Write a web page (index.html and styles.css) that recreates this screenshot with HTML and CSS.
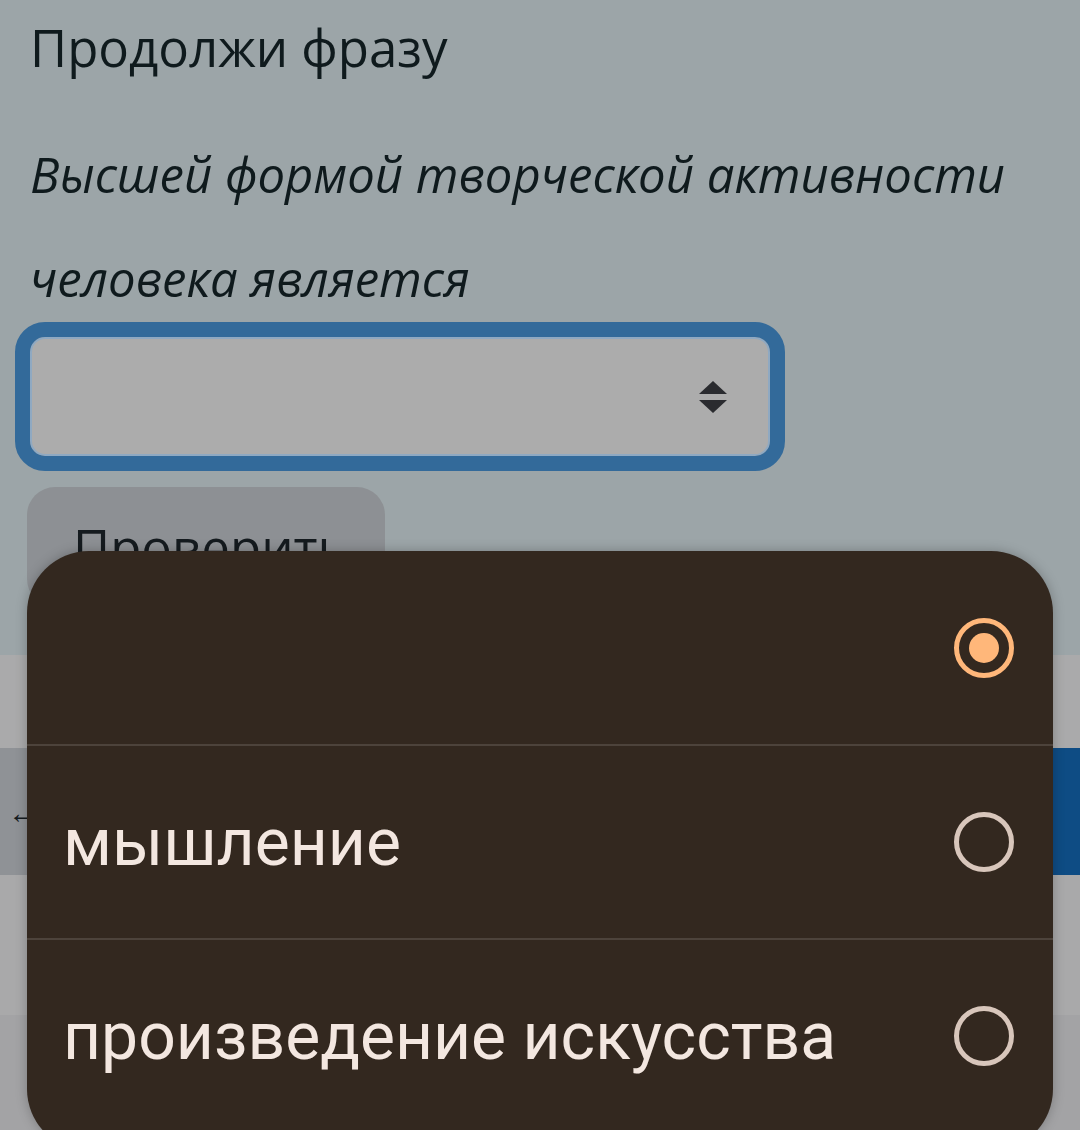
FILE: index.html
```html
<!DOCTYPE html>
<html lang="ru">
<head>
    <meta charset="UTF-8">
    <meta name="viewport" content="width=device-width, initial-scale=1.0">
    <title>Продолжи фразу</title>
<link rel="stylesheet" href="styles.css">
</head>
<body>
    <div class="quiz">
        <p class="prompt">Продолжи фразу</p>
        <p class="question">Высшей формой творческой активности человека является</p>
        <div class="select">
            <span class="arrows">
                <svg width="30" height="36" viewBox="0 0 30 36">
                    <path d="M15 2 L29 15 L1 15 Z" fill="#2a2b2f"/>
                    <path d="M1 21 L29 21 L15 34 Z" fill="#2a2b2f"/>
                </svg>
            </span>
        </div>
        <button class="check">Проверить</button>
    </div>
    <div class="band band-light"></div>
    <div class="nav">
        <div class="nav-prev">&larr;</div>
        <div class="nav-next"></div>
    </div>
    <div class="band band-mid"></div>
    <div class="band band-low"></div>

    <div class="sheet">
        <div class="option">
            <span class="label"></span>
            <span class="radio checked"></span>
        </div>
        <div class="option">
            <span class="label">мышление</span>
            <span class="radio"></span>
        </div>
        <div class="option">
            <span class="label">произведение искусства</span>
            <span class="radio"></span>
        </div>
    </div>
</body>
</html>
```

FILE: styles.css
```css
*{
    margin: 0;
    padding: 0;
    box-sizing: border-box;
}
body{
    width: 1080px;
    height: 1130px;
    overflow: hidden;
    background: #a3a3a5;
    font-family: "Open Sans", "Noto Sans", sans-serif;
    position: relative;
}
.quiz{
    height: 655px;
    background: #9ca5a8;
    padding: 15px 15px 0 30px;
    color: #0f1a1d;
}
.prompt{
    font-size: 51px;
    line-height: 64px;
}
.question{
    font-style: italic;
    font-size: 49px;
    line-height: 104px;
    margin-top: 43px;
    max-width: 1030px;
}
.select{
    width: 770px;
    height: 149px;
    margin-left: -15px;
    margin-top: -8px;
    border: 15px solid #336a9a;
    border-radius: 30px;
    background: #acacac;
    box-shadow: inset 0 0 0 2px #8fa9c2;
    display: flex;
    align-items: center;
    justify-content: flex-end;
    padding-right: 42px;
}
.arrows svg{
    display: block;
}
.check{
    display: block;
    margin-top: 16px;
    margin-left: -3px;
    width: 358px;
    height: 120px;
    border: 0;
    border-radius: 28px;
    background: #8d9094;
    color: #151b1f;
    font-family: "Open Sans", "Noto Sans", sans-serif;
    font-size: 51px;
    line-height: 64px;
    text-align: left;
    padding: 0 0 0 46px;
}
.band{
    height: 93px;
}
.band-light{
    background: #aaaaab;
}
.nav{
    height: 127px;
    display: flex;
}
.nav-prev{
    flex: 1;
    background: #8f9296;
    color: #151b1f;
    font-size: 30px;
    line-height: 127px;
    padding-left: 8px;
}
.nav-next{
    flex: 1;
    background: #0e4c84;
}
.band-mid{
    height: 140px;
    background: #a9a9aa;
}
.band-low{
    height: 115px;
    background: #a3a3a5;
}

/* the picker sheet lies over the dimmed page */
.sheet{
    position: absolute;
    left: 27px;
    top: 551px;
    width: 1026px;
    height: 600px;
    background: #33281f;
    border-radius: 62px;
    box-shadow: 0 0 12px rgba(0, 0, 0, 0.25);
    overflow: hidden;
}
.option{
    height: 194px;
    display: flex;
    align-items: center;
    justify-content: space-between;
    padding: 0 39px 0 36px;
    border-top: 2px solid #4d433b;
}
.option:first-child{
    height: 193px;
    border-top: 0;
}
.label{
    font-family: Roboto, "Noto Sans", sans-serif;
    font-size: 66px;
    color: #f3e7e0;
}
.radio{
    width: 60px;
    height: 60px;
    border: 5px solid #d8c6bb;
    border-radius: 50%;
    position: relative;
}
.radio.checked{
    border-color: #ffb77a;
}
.radio.checked::after{
    content: "";
    position: absolute;
    left: 10px;
    top: 10px;
    width: 30px;
    height: 30px;
    border-radius: 50%;
    background: #ffb77a;
}
```
